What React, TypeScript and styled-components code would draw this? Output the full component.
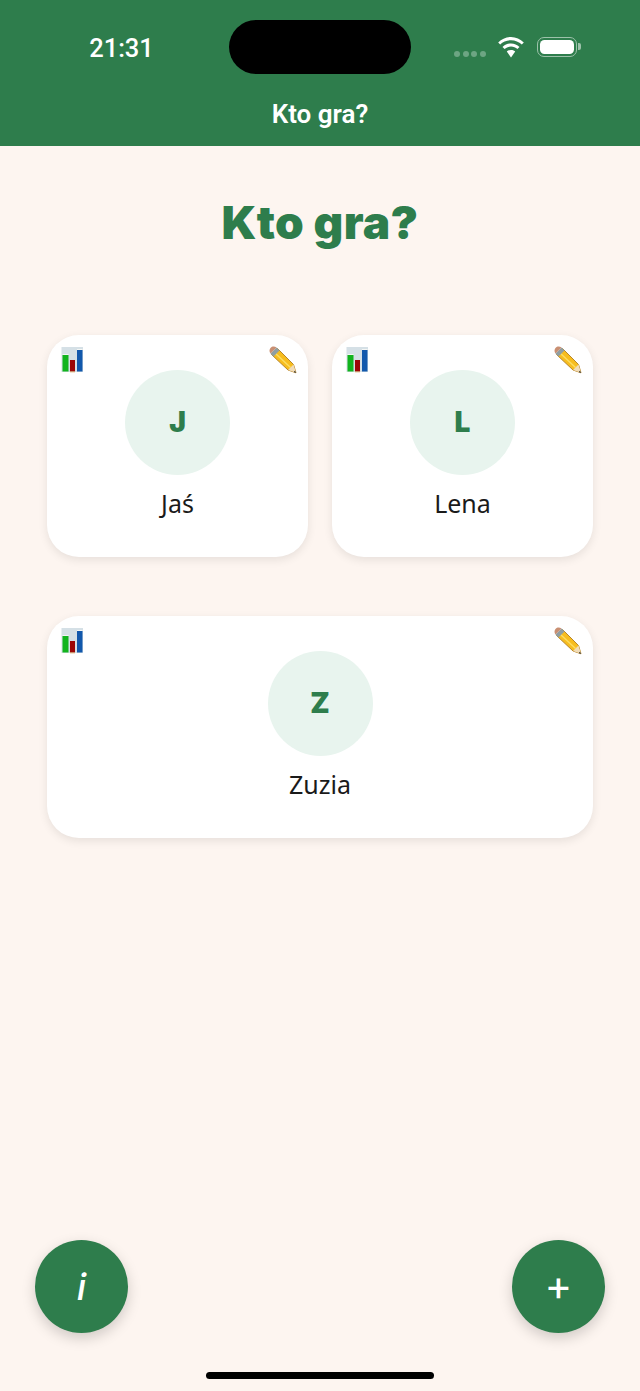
import React from "react";
import styled, { createGlobalStyle } from "styled-components";

const Global = createGlobalStyle`
  html, body { margin: 0; padding: 0; background: #fdf5f0; }
  #root { width: 640px; height: 1391px; overflow: hidden; }
`;
const Page = styled.div`
  width: 640px; height: 1391px; display: flex; flex-direction: column; background: #fdf5f0;
  font-family: "Noto Sans", "Open Sans", sans-serif;
`;
const Header = styled.header`
  height: 146px; flex: none; background: #2e7d4c; display: flex; flex-direction: column; align-items: center;
`;
const StatusBar = styled.div`
  width: 100%; height: 73px; padding-top: 20px; box-sizing: border-box; display: grid;
  grid-template-columns: 229px 182px 229px; align-items: start;
`;
const Time = styled.div`
  font-family: "Roboto", "Liberation Sans", sans-serif; font-size: 25.5px; font-weight: 500; color: #fff;
  text-align: center; line-height: 30px; margin-top: 13px; padding-left: 14px;
`;
const Island = styled.div`
  height: 54px; border-radius: 27px; background: #000;
`;
const StatusIcons = styled.div`
  display: flex; align-items: flex-start; padding: 17px 0 0 43px;
`;
const Dots = styled.div`
  display: flex; gap: 2.5px; margin-top: 14px; margin-right: 11px;
`;
const Dot = styled.span`
  width: 6px; height: 6px; border-radius: 50%; background: #6da583;
`;
const BatteryShell = styled.div`
  margin-left: 12px; width: 40px; height: 20px; box-sizing: border-box; border: 1.5px solid #9cc2aa;
  border-radius: 7px; padding: 2px; position: relative;
  &::after {
    content: ""; position: absolute; right: -5px; top: 5px; width: 2.5px; height: 7px;
    background: #9cc2aa; border-radius: 0 2px 2px 0;
  }
`;
const BatteryFill = styled.div`
  width: 100%; height: 100%; background: #fff; border-radius: 4.5px;
`;
const HeaderTitle = styled.div`
  font-family: "Roboto", "Liberation Sans", sans-serif; font-size: 26px; font-weight: 600; color: #fff;
  line-height: 28px; margin-top: 27px;
`;
const Main = styled.main`
  flex: 1; display: flex; flex-direction: column; padding: 0 47px;
`;
const Title = styled.h1`
  margin: 47px 0 0; height: 59px; line-height: 59px; font-size: 46px; font-weight: 900; color: #2e7d4c;
  text-align: center; font-family: "Inter", sans-serif; letter-spacing: 0.3px;
`;
const Grid = styled.div`
  margin-top: 83px; display: grid; grid-template-columns: 261px 261px; column-gap: 24px; row-gap: 59px;
`;
const Card = styled.div<{ $wide?: boolean }>`
  grid-column: ${(p) => (p.$wide ? "1 / span 2" : "auto")};
  position: relative; height: 222px; box-sizing: border-box; background: #fff; border-radius: 32px;
  box-shadow: 0 3px 10px rgba(0, 0, 0, 0.09); display: flex; flex-direction: column; align-items: center;
  padding-top: 35px;
`;
const Avatar = styled.div`
  width: 105px; height: 105px; border-radius: 50%; background: #e8f4ee; display: flex; align-items: center;
  justify-content: center; font-size: 28px; line-height: 29px; font-weight: 900; color: #2e7d4c;
  font-family: "Inter", sans-serif; padding-bottom: 1px; box-sizing: border-box;
`;
const Name = styled.div`
  margin-top: 10px; font-size: 25px; line-height: 36px; color: #1a1a1a; font-family: "Noto Sans", sans-serif;
`;
const StatsBadge = styled.svg`
  position: absolute; left: 14px; top: 12px;
`;
const EditBadge = styled.svg`
  position: absolute; right: 11px; top: 11px;
`;
const Footer = styled.footer`
  flex: none; display: flex; justify-content: space-between; padding: 0 35px;
`;
const Fab = styled.div<{ $italic?: boolean }>`
  width: 93px; height: 93px; border-radius: 50%; background: #2e7d4c; color: #fff; display: flex;
  align-items: center; justify-content: center; box-shadow: 0 5px 14px rgba(0, 0, 0, 0.18);
  font-family: "Inter", "Liberation Sans", sans-serif; font-size: ${(p) => (p.$italic ? 37 : 42)}px;
  font-style: ${(p) => (p.$italic ? "italic" : "normal")}; font-weight: ${(p) => (p.$italic ? 500 : 400)};
  padding-bottom: ${(p) => (p.$italic ? 0 : 4)}px; box-sizing: border-box;
`;
const HomeBar = styled.div`
  flex: none; width: 228px; height: 7px; border-radius: 4px; background: #000; margin: 39px auto 12px;
`;

const Stats = () => (
  <StatsBadge width="23" height="26" viewBox="0 0 23 26">
    <rect x="0.5" y="0" width="21.500" height="25" fill="#d5e0e6" />
    <rect x="1.500" y="8" width="6" height="16.500" fill="#12b41e" />
    <rect x="1.500" y="7" width="6" height="1" fill="#f4f6f4" />
    <rect x="9" y="13" width="5" height="11.500" fill="#9c0606" />
    <rect x="9" y="24.500" width="5" height="0.800" fill="#d6a860" />
    <rect x="16" y="3" width="5.500" height="21.500" fill="#1258ac" />
    <rect x="16" y="2" width="5.500" height="1" fill="#f4f6f4" />
  </StatsBadge>
);
const Pencil = () => (
  <EditBadge width="28" height="28" viewBox="0 0 28 28">
    <path d="M8.500 2.500 L2.500 8.500 L19 24 L27 26.800 L24.500 18.500 Z" fill="#f7bd1e" stroke="#b8862a" strokeWidth="1" strokeLinejoin="round" />
    <path d="M6 7 L21.500 21.500" stroke="#fbdc62" strokeWidth="1.500" />
    <path d="M1.500 7.500 L7.500 1.500 L10.500 4.500 L4.500 10.500 Z" fill="#8f9ea2" />
    <path d="M7.500 1.500 L1.500 7.500 C0 5.500 .3 3 1.700 1.700 C3 .3 5.500 0 7.500 1.500 Z" fill="#c98f72" />
    <path d="M19 24 L24.500 18.500 L27 26.800 Z" fill="#f1dcb8" />
    <path d="M24.800 26 L26 24.800 L27 27 Z" fill="#222" />
  </EditBadge>
);
const Wifi = () => (
  <svg width="28" height="21" viewBox="0 0 28 21">
    <path d="M14 3.200c4.200 0 8 1.600 10.800 4.300l2-2.100C23.400 2.100 18.900 0 14 0S4.600 2.100 1.200 5.400l2 2.100C6 4.800 9.800 3.200 14 3.200z" fill="#fff" />
    <path d="M14 9.600c2.500 0 4.700 1 6.400 2.500l2.100-2.100C20.200 7.800 17.300 6.500 14 6.500S7.800 7.800 5.500 10l2.100 2.100c1.700-1.500 3.900-2.500 6.400-2.500z" fill="#fff" />
    <path d="M14 12.900c-2 0-3.400.7-4.200 1.500L14 20.500l4.200-6.100c-.8-.8-2.200-1.500-4.200-1.500z" fill="#fff" />
  </svg>
);

const players = [
  { name: "Jaś", initial: "J" },
  { name: "Lena", initial: "L" },
  { name: "Zuzia", initial: "Z", wide: true },
];

export default function App() {
  return (
    <Page>
      <Global />
      <Header>
        <StatusBar>
          <Time>21:31</Time>
          <Island />
          <StatusIcons>
            <Dots><Dot /><Dot /><Dot /><Dot /></Dots>
            <Wifi />
            <BatteryShell><BatteryFill /></BatteryShell>
          </StatusIcons>
        </StatusBar>
        <HeaderTitle>Kto gra?</HeaderTitle>
      </Header>
      <Main>
        <Title>Kto gra?</Title>
        <Grid>
          {players.map((p) => (
            <Card key={p.name} $wide={p.wide}>
              <Stats />
              <Pencil />
              <Avatar>{p.initial}</Avatar>
              <Name>{p.name}</Name>
            </Card>
          ))}
        </Grid>
      </Main>
      <Footer>
        <Fab $italic>i</Fab>
        <Fab>+</Fab>
      </Footer>
      <HomeBar />
    </Page>
  );
}
